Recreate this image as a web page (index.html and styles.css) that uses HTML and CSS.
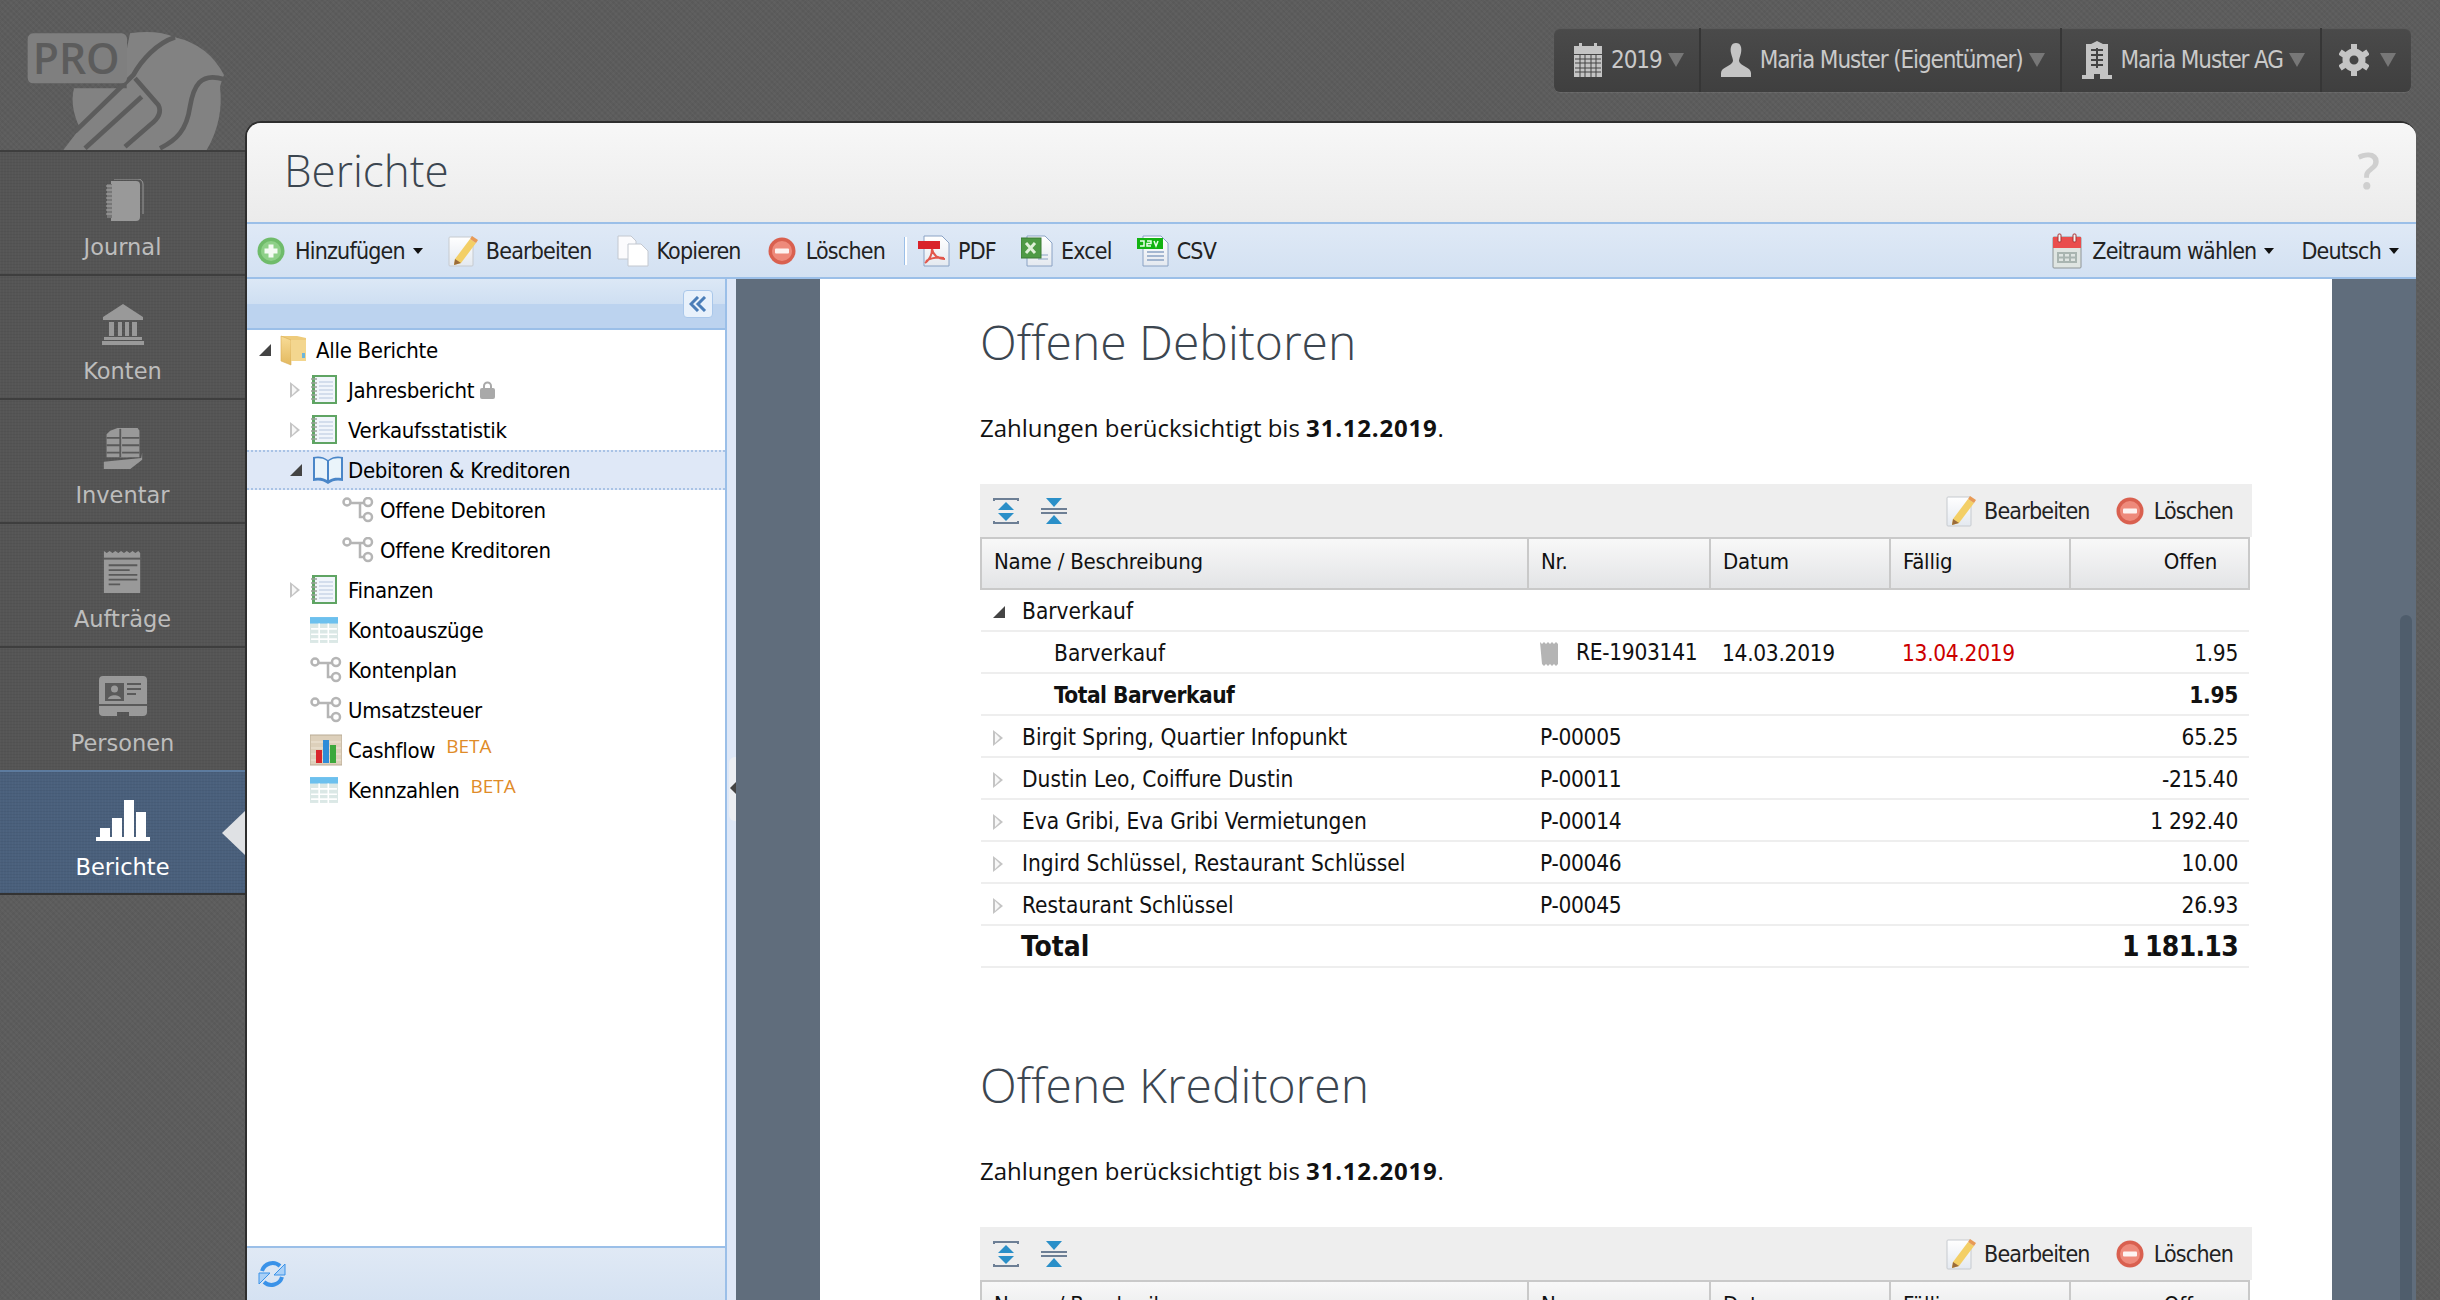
FILE: index.html
```html
<!DOCTYPE html>
<html lang="en">
<head>
  <meta charset="UTF-8" />
  <title>Berichte</title>
  <link rel="stylesheet" href="styles.css">
</head>
<body>
  <!-- shared icons -->
  <svg class="sprite" width="0" height="0">
    <defs>
      <linearGradient id="gPage" x1="0" y1="0" x2="0" y2="1"><stop offset="0" stop-color="#fff"/><stop offset="1" stop-color="#e4e9f0"/></linearGradient>
      <linearGradient id="gFolder" x1="0" y1="0" x2="0" y2="1"><stop offset="0" stop-color="#f8dc97"/><stop offset="1" stop-color="#e3b95f"/></linearGradient>
      <symbol id="i-plus" viewBox="0 0 28 28"><circle cx="14" cy="14" r="13.5" fill="#6fbb6a"/><circle cx="14" cy="14" r="10" fill="#8ed088"/><path d="M11.5 7.5h5v4h4v5h-4v4h-5v-4h-4v-5h4z" fill="#f4fbf3"/></symbol>
      <symbol id="i-minus" viewBox="0 0 28 28"><circle cx="14" cy="14" r="13.5" fill="#d9604f"/><circle cx="14" cy="14" r="10" fill="#ee8a7b"/><rect x="7" y="11.5" width="14" height="5" rx="1" fill="#fdf3f1"/></symbol>
      <symbol id="i-edit" viewBox="0 0 30 32"><rect x="1" y="2" width="24" height="29" rx="1" fill="url(#gPage)" stroke="#c6cacf"/><path d="M7 24l15-20 6 4-15 20-7 2z" fill="#f3cf66"/><path d="M22 4l2-3 6 4-2 3z" fill="#e89a56"/><path d="M7 24l6 4-7 2z" fill="#9a6b3a"/></symbol>
      <symbol id="i-copy" viewBox="0 0 32 32"><path d="M1 1h13l5 5v18H1z" fill="#fbfbfd" stroke="#c3c8d0"/><path d="M11 9h13l7 7v15H11z" fill="#fff" stroke="#c3c8d0"/></symbol>
      <symbol id="i-pdf" viewBox="0 0 32 32"><path d="M6 1h18l7 7v23H6z" fill="url(#gPage)" stroke="#8aa2c4"/><rect x="0" y="6" width="22" height="8" fill="#d9222a"/><path d="M14 14c0 6-3 11-7 14M14 14c1 6 6 10 13 10M8 26c5-3 12-4 18-3" fill="none" stroke="#e2574c" stroke-width="2"/></symbol>
      <symbol id="i-excel" viewBox="0 0 32 32"><path d="M6 1h18l7 7v23H6z" fill="url(#gPage)" stroke="#8aa2c4"/><path d="M17 20h10M17 24h10" stroke="#8aa2c4"/><rect x="0" y="3" width="20" height="20" fill="#4e9a45" stroke="#3a7a34"/><path d="M5 8l9 10M14 8l-9 10" stroke="#dff0d8" stroke-width="3"/></symbol>
      <symbol id="i-csv" viewBox="0 0 32 32"><path d="M6 1h18l7 7v23H6z" fill="url(#gPage)" stroke="#8aa2c4"/><path d="M10 17h17M10 21h17M10 25h17" stroke="#8aa2c4" stroke-width="1.5"/><rect x="0" y="3" width="26" height="11" fill="#12b312"/><path d="M3 6h4v5H3M10 6h4v2.500h-4V11h4M17 6l2 5 2-5" fill="none" stroke="#eaffea" stroke-width="1.500"/></symbol>
      <symbol id="i-cal" viewBox="0 0 30 36"><rect x="1" y="4" width="28" height="31" rx="1" fill="#dfe5e2" stroke="#8d9496"/><rect x="1" y="4" width="28" height="11" fill="#ea4d4d"/><rect x="6" y="1" width="3" height="8" rx="1" fill="#f4f4f4" stroke="#a33"/><rect x="21" y="1" width="3" height="8" rx="1" fill="#f4f4f4" stroke="#a33"/><path d="M6 20h18v9H6zM12 20v9M18 20v9M6 24.500h18" fill="none" stroke="#a9b5b1" stroke-width="2"/></symbol>
      <symbol id="i-folder" viewBox="0 0 28 32"><path d="M1 2h16l9 2v23H7z" fill="#eecb7b"/><path d="M1 2l10 4v25L1 27z" fill="url(#gFolder)" stroke="#d8ad56" stroke-width=".6"/><path d="M11 6h15v21H11z" fill="#f3d68f"/><rect x="22" y="19" width="3" height="5" fill="#6db6dc"/></symbol>
      <symbol id="i-note" viewBox="0 0 28 32"><rect x="2" y="1" width="25" height="29" fill="#5fa463"/><rect x="5" y="3" width="20" height="25" fill="#f1f5fb"/><path d="M9 8h14M9 12h14M9 16h14M9 20h14M9 24h14" stroke="#b5c5dd"/><path d="M1 5h6M1 9h6M1 13h6M1 17h6M1 21h6M1 25h6" stroke="#9aa19b" stroke-width="1.500"/></symbol>
      <symbol id="i-book" viewBox="0 0 32 32"><path d="M16 6C11 2 6 2 1 3v24c5-1 10-1 15 3 5-4 10-4 15-3V3c-5-1-10-1-15 3z" fill="#4a86c8"/><path d="M15 7C11 4 7 4 3 4.500V24c4-.5 8-.5 12 2zM17 7c4-3 8-3 12-2.500V24c-4-.5-8-.5-12 2z" fill="#eaf4fa"/></symbol>
      <symbol id="i-tree" viewBox="0 0 32 26"><g fill="#fff" stroke="#b5b5b5" stroke-width="2.500"><path d="M8 6h15M18 6v14h6" fill="none"/><circle cx="5" cy="5" r="3.500"/><circle cx="26" cy="5" r="4"/><circle cx="26" cy="20" r="4"/></g></symbol>
      <symbol id="i-table" viewBox="0 0 26 24"><rect width="26" height="24" fill="#dbe8e6"/><rect width="26" height="6" fill="#6cc0ee"/><path d="M1 11h24M1 16h24M1 20.500h24M8.500 6v18M17 6v18" stroke="#fff" stroke-width="1.500"/></symbol>
      <symbol id="i-chart" viewBox="0 0 32 30"><rect width="32" height="30" fill="#ddd0bb" stroke="#b9ab95"/><path d="M1 7h30M1 13h30M1 19h30M1 25h30" stroke="#efe6d7"/><rect x="6" y="15" width="6" height="13" fill="#d8262c"/><rect x="13" y="5" width="6" height="23" fill="#2e8bd8"/><rect x="20" y="10" width="6" height="18" fill="#3ca83c"/></symbol>
      <symbol id="i-expand" viewBox="0 0 28 28"><path d="M2 4V2h24v2M2 24v2h24v-2" fill="none" stroke="#6d7f95" stroke-width="2"/><path d="M14 5l8 8H6z" fill="#2a8fc8"/><path d="M14 24l8-8H6z" fill="#2a8fc8"/></symbol>
      <symbol id="i-collapse" viewBox="0 0 28 28"><path d="M6 1h16l-8 9z" fill="#2a8fc8"/><path d="M6 27h16l-8-9z" fill="#2a8fc8"/><path d="M1 12h26M1 16h26" stroke="#6d7f95" stroke-width="2"/></symbol>
      <symbol id="i-receipt" viewBox="0 0 18 24"><path d="M0 0l2 2 2-2 2 2 2-2 2 2 2-2 2 2 2-2 2 2v20l-2 2-2-2-2 2-2-2-2 2-2-2-2 2-2-2z" fill="#b4b4b4"/></symbol>
      <symbol id="i-refresh" viewBox="0 0 30 30"><path d="M5 12A11 11 0 0 1 23 7" fill="none" stroke="#3a92e8" stroke-width="4"/><path d="M25 18A11 11 0 0 1 7 23" fill="none" stroke="#3a92e8" stroke-width="4"/><path d="M28 5v11H17z" fill="#a9d0f7" stroke="#3a92e8"/><path d="M2 25V14h11z" fill="#a9d0f7" stroke="#3a92e8"/></symbol>
    </defs>
  </svg>

  <div class="shell">
    <aside class="side">
      <div class="logo">
        <svg width="240" height="150" viewBox="0 0 720 450">
          <path d="M390 100Q470 88 525 112Q625 135 672 225Q665 240 660 260Q672 360 620 450H190L240 385Q208 320 222 265H380V150Z" fill="#828282"/>
          <g fill="none" stroke="#5c5c5c" stroke-width="14">
            <path d="M525 112C470 130 425 180 400 225L225 395"/>
            <path d="M405 235L475 315Q490 345 450 375L375 440"/>
            <path d="M425 290L255 445"/>
            <path d="M672 238C600 215 580 260 570 320C560 390 530 420 480 445"/>
          </g>
          <rect x="83" y="100" width="298" height="150" rx="16" fill="#7f7f7f"/>
          <text x="98" y="223" class="logo-text">PRO</text>
        </svg>
      </div>
      <nav class="nav">
        <a class="nav-item">
          <svg width="44" height="42" viewBox="0 0 44 42" fill="#999"><path d="M10 2h25a4 4 0 0 1 4 4v32a4 4 0 0 1-4 4H10z"/><path d="M13 0h24a5 5 0 0 1 5 5v30" fill="none" stroke="#999" stroke-width="1"/><rect x="6" y="5" width="5" height="34" fill="#777"/><path d="M5 7h6M5 11h6M5 15h6M5 19h6M5 23h6M5 27h6M5 31h6M5 35h6" stroke="#aaa"/></svg>
          <span>Journal</span>
        </a>
        <a class="nav-item">
          <svg width="44" height="42" viewBox="0 0 44 42" fill="#999"><path d="M22 1l20 13v3H2v-3z"/><path d="M8 19h5v14H8zM17 19h4v14h-4zM24 19h4v14h-4zM31 19h5v14h-5z"/><rect x="3" y="34" width="38" height="3"/><rect x="1" y="38" width="42" height="4"/></svg>
          <span>Konten</span>
        </a>
        <a class="nav-item">
          <svg width="44" height="46" viewBox="0 0 44 46" fill="#999"><path d="M8 4l8-3h12v32H4V8z"/><path d="M19 1h19l2 3v29H19z"/><path d="M4 12h15M4 20h15M4 28h15M21 12h19M21 20h19M21 28h19" stroke="#5a5a5a" stroke-width="2"/><path d="M1 38l41-4 1-6v8L30 46H1z"/><path d="M19 2v31" stroke="#5a5a5a" stroke-width="2"/></svg>
          <span>Inventar</span>
        </a>
        <a class="nav-item">
          <svg width="44" height="44" viewBox="0 0 44 44" fill="#999"><path d="M2 0l3 2 3-2 3 2 3-2 3 2 3-2 3 2 3-2 3 2 3-2 3 2 3-2 2 2v42H2z"/><rect x="2" y="7" width="40" height="2" fill="#5a5a5a"/><path d="M7 15h30M7 20h22M7 25h30M7 30h30M7 35h12" stroke="#5a5a5a" stroke-width="2"/></svg>
          <span>Aufträge</span>
        </a>
        <a class="nav-item">
          <svg width="48" height="40" viewBox="0 0 48 40" fill="#999"><path d="M4 0h40a4 4 0 0 1 4 4v32a4 4 0 0 1-4 4H30v-4H18v4H4a4 4 0 0 1-4-4V4a4 4 0 0 1 4-4z"/><rect x="6" y="7" width="19" height="18" fill="#5a5a5a"/><circle cx="15.500" cy="13" r="3.500"/><path d="M9 23c1-5 12-5 13 0z"/><path d="M28 8h14M28 13h14M28 18h9" stroke="#5a5a5a" stroke-width="2"/><path d="M0 29h48" stroke="#5a5a5a" stroke-width="2"/></svg>
          <span>Personen</span>
        </a>
        <a class="nav-item active">
          <svg width="56" height="42" viewBox="0 0 56 42" fill="#fff"><rect x="5" y="29" width="10" height="9"/><rect x="17" y="19" width="10" height="19"/><rect x="29" y="1" width="10" height="37"/><rect x="41" y="13" width="10" height="25"/><rect x="1" y="38" width="54" height="4"/></svg>
          <span>Berichte</span>
        </a>
      </nav>
    </aside>

    <div class="main">
      <header class="topbar">
        <div class="top-group">
          <a class="top-btn">
            <svg width="28" height="34" viewBox="0 0 28 34" fill="#c4c4c4"><path d="M0 3h5V0h3v3h12V0h3v3h5v8H0z"/><path d="M0 12h28v22H0z"/><path d="M1 16h26M1 20h26M1 25h26M1 29h26M6 12v22M11 12v22M17 12v22M22 12v22" stroke="#444"/></svg>
            2019<i class="down"></i>
          </a>
          <a class="top-btn">
            <svg width="30" height="34" viewBox="0 0 30 34" fill="#c4c4c4"><path d="M15 0c5 0 6 5 5 10-1 4-2 6-2 8 1 5 12 6 12 12v4H0v-4c0-6 11-7 12-12 0-2-1-4-2-8-1-5 0-10 5-10z"/></svg>
            Maria Muster (Eigentümer)<i class="down"></i>
          </a>
          <a class="top-btn">
            <svg width="30" height="38" viewBox="0 0 30 38" fill="#c4c4c4"><path d="M9 3l6-3 6 3h5v31h4v4H18v-5h-6v5H0v-4h4V3z"/><path d="M9 9h12M9 14h12M9 19h12M9 24h12M15 7v20" stroke="#444" stroke-width="2"/></svg>
            Maria Muster AG<i class="down"></i>
          </a>
          <a class="top-btn last">
            <svg width="30" height="34" viewBox="0 0 30 34" fill="none" stroke="#c4c4c4"><circle cx="15" cy="17" r="8" stroke-width="7"/><path d="M15 1v7M15 26v7M1 9l6 4M23 21l6 4M1 25l6-4M23 13l6-4" stroke-width="6"/></svg>
            <i class="down"></i>
          </a>
        </div>
      </header>

      <section class="panel">
        <div class="panel-title">
          <h1>Berichte</h1>
          <span class="help">?</span>
        </div>

        <div class="toolbar">
          <a class="tool"><svg class="ic28"><use href="#i-plus"/></svg>Hinzufügen<i class="caret"></i></a>
          <a class="tool"><svg class="ic30"><use href="#i-edit"/></svg>Bearbeiten</a>
          <a class="tool tool-copy"><svg class="ic32"><use href="#i-copy"/></svg>Kopieren</a>
          <a class="tool"><svg class="ic28"><use href="#i-minus"/></svg>Löschen</a>
          <span class="tool-sep"></span>
          <a class="tool"><svg class="ic32"><use href="#i-pdf"/></svg>PDF</a>
          <a class="tool"><svg class="ic32"><use href="#i-excel"/></svg>Excel</a>
          <a class="tool"><svg class="ic32"><use href="#i-csv"/></svg>CSV</a>
          <span class="tool-fill"></span>
          <a class="tool tool-date"><svg class="ic-cal"><use href="#i-cal"/></svg>Zeitraum wählen<i class="caret"></i></a>
          <a class="tool tool-lang">Deutsch<i class="caret"></i></a>
        </div>

        <div class="work">
          <div class="tree-pane">
            <div class="tree-head"><button class="collapse-btn"><svg width="18" height="16" viewBox="0 0 18 16" fill="none" stroke="#4a7db8" stroke-width="3"><path d="M9 1L2 8l7 7M16 1L9 8l7 7"/></svg></button></div>
            <ul class="tree">
              <li class="node lv0"><i class="tw open"></i><svg class="ni"><use href="#i-folder"/></svg>Alle Berichte</li>
              <li class="node lv1"><i class="tw"></i><svg class="ni"><use href="#i-note"/></svg>Jahresbericht
                <svg class="lock" width="15" height="18" viewBox="0 0 15 18" fill="#a9a9a9"><path d="M3 8V5a4.500 4.500 0 0 1 9 0v3h-2V5a2.500 2.500 0 0 0-5 0v3z"/><rect y="7" width="15" height="11" rx="2"/></svg></li>
              <li class="node lv1"><i class="tw"></i><svg class="ni"><use href="#i-note"/></svg>Verkaufsstatistik</li>
              <li class="node lv1 selected"><i class="tw open"></i><svg class="ni wide"><use href="#i-book"/></svg>Debitoren &amp; Kreditoren</li>
              <li class="node lv2"><svg class="ni"><use href="#i-tree"/></svg>Offene Debitoren</li>
              <li class="node lv2"><svg class="ni"><use href="#i-tree"/></svg>Offene Kreditoren</li>
              <li class="node lv1"><i class="tw"></i><svg class="ni"><use href="#i-note"/></svg>Finanzen</li>
              <li class="node lv1"><i class="tw none"></i><svg class="ni"><use href="#i-table"/></svg>Kontoauszüge</li>
              <li class="node lv1"><i class="tw none"></i><svg class="ni wide"><use href="#i-tree"/></svg>Kontenplan</li>
              <li class="node lv1"><i class="tw none"></i><svg class="ni wide"><use href="#i-tree"/></svg>Umsatzsteuer</li>
              <li class="node lv1"><i class="tw none"></i><svg class="ni wide"><use href="#i-chart"/></svg>Cashflow<span class="beta">BETA</span></li>
              <li class="node lv1"><i class="tw none"></i><svg class="ni"><use href="#i-table"/></svg>Kennzahlen<span class="beta">BETA</span></li>
            </ul>
            <div class="tree-foot"><svg width="30" height="30"><use href="#i-refresh"/></svg></div>
          </div>

          <div class="splitter"><span class="grip"></span></div>

          <div class="viewer">
            <div class="page">
              <div class="report">
                <h2>Offene Debitoren</h2>
                <p class="note">Zahlungen berücksichtigt bis <b>31.12.2019</b>.</p>
                <div class="tbl-bar">
                  <svg class="ic28"><use href="#i-expand"/></svg>
                  <svg class="ic28"><use href="#i-collapse"/></svg>
                  <span class="tool-fill"></span>
                  <a class="tool"><svg class="ic30"><use href="#i-edit"/></svg>Bearbeiten</a>
                  <a class="tool"><svg class="ic28"><use href="#i-minus"/></svg>Löschen</a>
                </div>
                <table class="tbl">
                  <colgroup><col class="c1"><col class="c2"><col class="c3"><col class="c4"><col class="c5"></colgroup>
                  <thead><tr><th>Name / Beschreibung</th><th>Nr.</th><th>Datum</th><th>Fällig</th><th class="num">Offen</th></tr></thead>
                  <tbody>
                    <tr><td><i class="tw open"></i>Barverkauf</td><td></td><td></td><td></td><td></td></tr>
                    <tr><td class="in">Barverkauf</td><td><svg class="rc"><use href="#i-receipt"/></svg>RE-1903141</td><td>14.03.2019</td><td class="late">13.04.2019</td><td class="num">1.95</td></tr>
                    <tr class="sub"><td class="in">Total Barverkauf</td><td></td><td></td><td></td><td class="num">1.95</td></tr>
                    <tr><td><i class="tw"></i>Birgit Spring, Quartier Infopunkt</td><td>P-00005</td><td></td><td></td><td class="num">65.25</td></tr>
                    <tr><td><i class="tw"></i>Dustin Leo, Coiffure Dustin</td><td>P-00011</td><td></td><td></td><td class="num">-215.40</td></tr>
                    <tr><td><i class="tw"></i>Eva Gribi, Eva Gribi Vermietungen</td><td>P-00014</td><td></td><td></td><td class="num">1 292.40</td></tr>
                    <tr><td><i class="tw"></i>Ingird Schlüssel, Restaurant Schlüssel</td><td>P-00046</td><td></td><td></td><td class="num">10.00</td></tr>
                    <tr><td><i class="tw"></i>Restaurant Schlüssel</td><td>P-00045</td><td></td><td></td><td class="num">26.93</td></tr>
                    <tr class="grand"><td>Total</td><td></td><td></td><td></td><td class="num">1 181.13</td></tr>
                  </tbody>
                </table>
              </div>

              <div class="report">
                <h2>Offene Kreditoren</h2>
                <p class="note">Zahlungen berücksichtigt bis <b>31.12.2019</b>.</p>
                <div class="tbl-bar">
                  <svg class="ic28"><use href="#i-expand"/></svg>
                  <svg class="ic28"><use href="#i-collapse"/></svg>
                  <span class="tool-fill"></span>
                  <a class="tool"><svg class="ic30"><use href="#i-edit"/></svg>Bearbeiten</a>
                  <a class="tool"><svg class="ic28"><use href="#i-minus"/></svg>Löschen</a>
                </div>
                <table class="tbl">
                  <colgroup><col class="c1"><col class="c2"><col class="c3"><col class="c4"><col class="c5"></colgroup>
                  <thead><tr><th>Name / Beschreibung</th><th>Nr.</th><th>Datum</th><th>Fällig</th><th class="num">Offen</th></tr></thead>
                </table>
              </div>
            </div>
            <div class="scroll-thumb"></div>
          </div>
        </div>
      </section>
    </div>
  </div>
</body>
</html>
```

FILE: styles.css
```css
:root {
  --ui-font: "DejaVu Sans Condensed", "DejaVu Sans", sans-serif;
  --blue-line: #9bbfe8;
}

* {
  box-sizing: border-box;
}

html, body {
  height: 100%;
}

body {
  margin: 0;
  overflow: hidden;
  background-color: #5c5c5c;
  background-image:
    repeating-linear-gradient(45deg, rgba(255,255,255,0.025) 0 2px, transparent 2px 4px),
    repeating-linear-gradient(-45deg, rgba(0,0,0,0.035) 0 2px, transparent 2px 4px);
  font-family: var(--ui-font);
  font-stretch: condensed;
  font-size: 22px;
  color: #111;
}

.sprite {
  position: absolute;
}

.shell {
  display: flex;
  height: 1300px;
}

/* Left column */
.side {
  width: 245px;
  flex: none;
}

.logo {
  height: 150px;
  overflow: hidden;
}

.logo svg {
  display: block;
}

.logo-text {
  font-family: "Open Sans", sans-serif;
  font-stretch: normal;
  font-weight: 600;
  font-size: 128px;
  fill: #5c5c5c;
}

.nav-item {
  display: flex;
  flex-direction: column;
  align-items: center;
  height: 124px;
  padding-top: 27px;
  position: relative;
  border-top: 2px solid #3e3e3e;
  background-color: #555;
  background-image:
    repeating-linear-gradient(0deg, rgba(0,0,0,0.05) 0 1px, transparent 1px 3px),
    repeating-linear-gradient(90deg, rgba(255,255,255,0.02) 0 1px, transparent 1px 3px);
  font-family: "DejaVu Sans", sans-serif;
  font-stretch: normal;
  font-size: 22.5px;
  color: #bdbdbd;
}

.nav-item svg {
  height: 42px;
  flex: none;
}

.nav-item span {
  margin-top: 13px;
}

.nav-item.active {
  height: 125px;
  background-color: #4a607c;
  border-top-color: #5d7b9e;
  border-bottom: 2px solid #333;
  color: #fff;
}

.nav-item.active::after {
  content: "";
  position: absolute;
  right: 0;
  top: 39px;
  border: 22px solid transparent;
  border-right-color: #dfe1e4;
  border-left-width: 0;
  border-right-width: 23px;
}

/* Right column */
.main {
  flex: 1;
  min-width: 0;
  padding-right: 24px;
  display: flex;
  flex-direction: column;
}

.topbar {
  height: 121px;
  flex: none;
  display: flex;
  justify-content: flex-end;
  align-items: flex-start;
  padding: 28px 5px 0 0;
}

.top-group {
  display: flex;
  height: 64px;
  border-radius: 6px;
  background: linear-gradient(#4a4a4a, #3f3f3f);
  box-shadow: 0 1px 1px rgba(255,255,255,0.08), inset 0 1px 1px rgba(255,255,255,0.1);
}

.top-btn {
  display: flex;
  align-items: center;
  padding: 0 15px 0 20px;
  border-right: 2px solid #363636;
  color: #c9c9c9;
  font-size: 24px;
  letter-spacing: -1.1px;
  white-space: nowrap;
}

.top-btn svg {
  margin-right: 9px;
}

.top-btn.last {
  border-right: none;
  padding-left: 17px;
}

.top-btn.last svg {
  margin-right: 5px;
}

.down {
  display: inline-block;
  margin-left: 6px;
  border-left: 8px solid transparent;
  border-right: 8px solid transparent;
  border-top: 14px solid #777;
}

.panel {
  flex: 1;
  min-height: 0;
  display: flex;
  flex-direction: column;
  background: #eee;
  border-top: 2px solid #2e2e2e;
  border-left: 2px solid #2e2e2e;
  border-radius: 16px 16px 0 0;
  overflow: hidden;
}

.panel-title {
  height: 99px;
  flex: none;
  display: flex;
  justify-content: space-between;
  align-items: center;
  padding: 0 36px 6px 37px;
  background: linear-gradient(#f7f7f7, #ebebeb);
}

.panel-title h1 {
  margin: 0;
  font-family: "Open Sans", sans-serif;
  font-stretch: normal;
  font-weight: 300;
  font-size: 44px;
  color: #3c4650;
}

.help {
  font-family: "Open Sans", sans-serif;
  font-stretch: normal;
  font-weight: 600;
  font-size: 50px;
  color: #cfcfcf;
}

.toolbar {
  height: 57px;
  flex: none;
  display: flex;
  align-items: center;
  padding: 0 17px 0 10px;
  border-top: 2px solid var(--blue-line);
  border-bottom: 2px solid var(--blue-line);
  background: linear-gradient(#dfe9f6, #d3e1f2);
}

.tool {
  display: flex;
  align-items: center;
  margin-right: 25px;
  color: #222;
  font-size: 23px;
  letter-spacing: -0.8px;
  white-space: nowrap;
}

.tool svg {
  margin-right: 10px;
  flex: none;
}

.tool svg.ic30,
.tool svg.ic32 {
  margin-right: 8px;
}

.ic28 { width: 28px; height: 28px; }
.ic30 { width: 30px; height: 32px; }
.ic32 { width: 32px; height: 32px; }
.ic-cal { width: 30px; height: 36px; }

.caret {
  display: inline-block;
  margin-left: 8px;
  border-left: 5px solid transparent;
  border-right: 5px solid transparent;
  border-top: 6px solid #111;
}

.tool-sep {
  width: 3px;
  height: 28px;
  margin: 0 11px 0 -6px;
  background: #fff;
  border-left: 1px solid #9bbfe8;
}

.tool-fill {
  flex: 1;
}

.tool-copy {
  margin-right: 27px;
}

.tool-date {
  margin-right: 27px;
}

.tool-lang {
  margin-right: 0;
}

.work {
  flex: 1;
  min-height: 0;
  display: flex;
}

/* Tree */
.tree-pane {
  width: 480px;
  flex: none;
  display: flex;
  flex-direction: column;
  background: #fff;
  border-right: 2px solid var(--blue-line);
}

.tree-head {
  height: 51px;
  flex: none;
  display: flex;
  justify-content: flex-end;
  align-items: center;
  padding-right: 12px;
  border-bottom: 2px solid var(--blue-line);
  background: linear-gradient(#dce8f6 0, #cfdff2 50%, #bcd3ef 50%, #bcd3ef 100%);
}

.collapse-btn {
  width: 30px;
  height: 28px;
  padding: 0;
  display: flex;
  align-items: center;
  justify-content: center;
  border: 1px solid #a9c7ea;
  border-radius: 4px;
  background: #e8f1fb;
}

.tree {
  flex: 1;
  list-style: none;
  margin: 0;
  padding: 0;
}

.node {
  display: flex;
  align-items: center;
  height: 40px;
  color: #000;
  letter-spacing: -0.3px;
  white-space: nowrap;
}

.lv0 { padding-left: 12px; }
.lv1 { padding-left: 43px; }
.lv2 { padding-left: 95px; }

.node.selected {
  background: #dfe8f7;
  border-top: 2px dotted #a9c3e6;
  border-bottom: 2px dotted #a9c3e6;
}

.ni {
  width: 28px;
  height: 32px;
  margin: 0 10px 0 10px;
  flex: none;
}

.ni.wide {
  width: 32px;
  margin-right: 6px;
}

.selected .ni.wide {
  margin-right: 4px;
}

.lv0 .ni { margin-left: 9px; margin-right: 8px; }
.lv2 .ni { width: 32px; height: 26px; margin: 0 6px 0 0; }

.tw {
  display: inline-block;
  flex: none;
  position: relative;
  width: 0;
  height: 0;
  border-top: 8px solid transparent;
  border-bottom: 8px solid transparent;
  border-left: 10px solid #c4c4c4;
}

.tw::after {
  content: "";
  position: absolute;
  left: -8px;
  top: -5px;
  border-top: 5px solid transparent;
  border-bottom: 5px solid transparent;
  border-left: 5px solid #f7f7f7;
}

.tw.open {
  border-top: 0 solid transparent;
  border-bottom: 12px solid #444;
  border-left: 12px solid transparent;
}

.tw.open::after,
.tw.none::after {
  content: none;
}

.tw.none {
  width: 10px;
  border-color: transparent;
  border-left-width: 0;
}

.lock {
  margin-left: 6px;
}

.beta {
  margin: -8px 0 0 11px;
  font-family: "Open Sans", sans-serif;
  font-stretch: normal;
  font-size: 19px;
  letter-spacing: 0;
  color: #df8b28;
}

.tree-foot {
  height: 54px;
  flex: none;
  display: flex;
  align-items: center;
  padding-left: 10px;
  border-top: 2px solid var(--blue-line);
  background: linear-gradient(#e0e9f5, #d5e2f2);
}

.splitter {
  width: 9px;
  flex: none;
  position: relative;
  background: #dfe8f7;
}

.grip {
  position: absolute;
  left: 2px;
  top: 478px;
  width: 8px;
  height: 64px;
  border-radius: 6px 0 0 6px;
  background: #eceff3;
}

.grip::after {
  content: "";
  position: absolute;
  left: 1px;
  top: 25px;
  border-top: 6px solid transparent;
  border-bottom: 6px solid transparent;
  border-right: 6px solid #444;
}

/* Report */
.viewer {
  flex: 1;
  min-width: 0;
  position: relative;
  overflow: hidden;
  background: #606d7c;
  padding: 0 84px;
}

.page {
  height: 100%;
  background: #fff;
  padding: 0 80px 0 160px;
}

.scroll-thumb {
  position: absolute;
  right: 4px;
  top: 336px;
  bottom: 0;
  width: 12px;
  border-radius: 6px 6px 0 0;
  background: #4f5d6c;
}

.report {
  padding-top: 30px;
  height: 743px;
}

.report h2 {
  margin: 0;
  font-family: "Open Sans", sans-serif;
  font-stretch: normal;
  font-weight: 300;
  font-size: 48px;
  line-height: 66px;
  color: #3c4650;
}

.note {
  margin: 37px 0 0;
  height: 72px;
  font-family: "Open Sans", sans-serif;
  font-stretch: normal;
  font-size: 24px;
  line-height: 32px;
  color: #111;
}

.note b {
  letter-spacing: 0.8px;
}

.tbl-bar {
  height: 53px;
  display: flex;
  align-items: center;
  gap: 20px;
  padding-left: 12px;
  background: #eee;
}

.tbl-bar .tool {
  margin: 0 0 0 6px;
}

.tbl-bar .tool:last-child {
  margin-right: 19px;
}

.tbl {
  width: 1270px;
  table-layout: fixed;
  border-collapse: collapse;
  font-size: 22.5px;
}

.c1 { width: 547px; }
.c2 { width: 182px; }
.c3 { width: 180px; }
.c4 { width: 180px; }

.tbl th {
  height: 51px;
  padding: 0 12px 5px;
  text-align: left;
  font-size: 22px;
  font-weight: normal;
  letter-spacing: -0.2px;
  border: 2px solid #c9c9c9;
  background: linear-gradient(#f8f8f8, #e3e4e6);
}

.tbl th.num {
  padding-right: 31px;
  text-align: right;
}

.tbl td.num {
  padding-right: 11px;
  text-align: right;
}

.tbl td {
  height: 42px;
  padding: 1px 12px 0;
  border-bottom: 2px solid #eee;
  white-space: nowrap;
  overflow: hidden;
}

.tbl td + td {
  letter-spacing: -0.3px;
}

.tbl .tw {
  margin-right: 19px;
  vertical-align: middle;
}

.tbl .tw.open {
  margin-right: 17px;
}

.tbl td.in {
  padding-left: 73px;
}

.tbl .rc {
  width: 18px;
  height: 24px;
  margin-right: 18px;
  vertical-align: middle;
}

.late {
  color: #cc0000;
}

.sub td {
  font-weight: bold;
  letter-spacing: -0.5px;
}

.grand td {
  font-weight: bold;
  font-size: 28px;
}

.grand .num {
  word-spacing: -2px;
  letter-spacing: -0.7px;
}

.grand td:first-child {
  padding-left: 40px;
}
```
